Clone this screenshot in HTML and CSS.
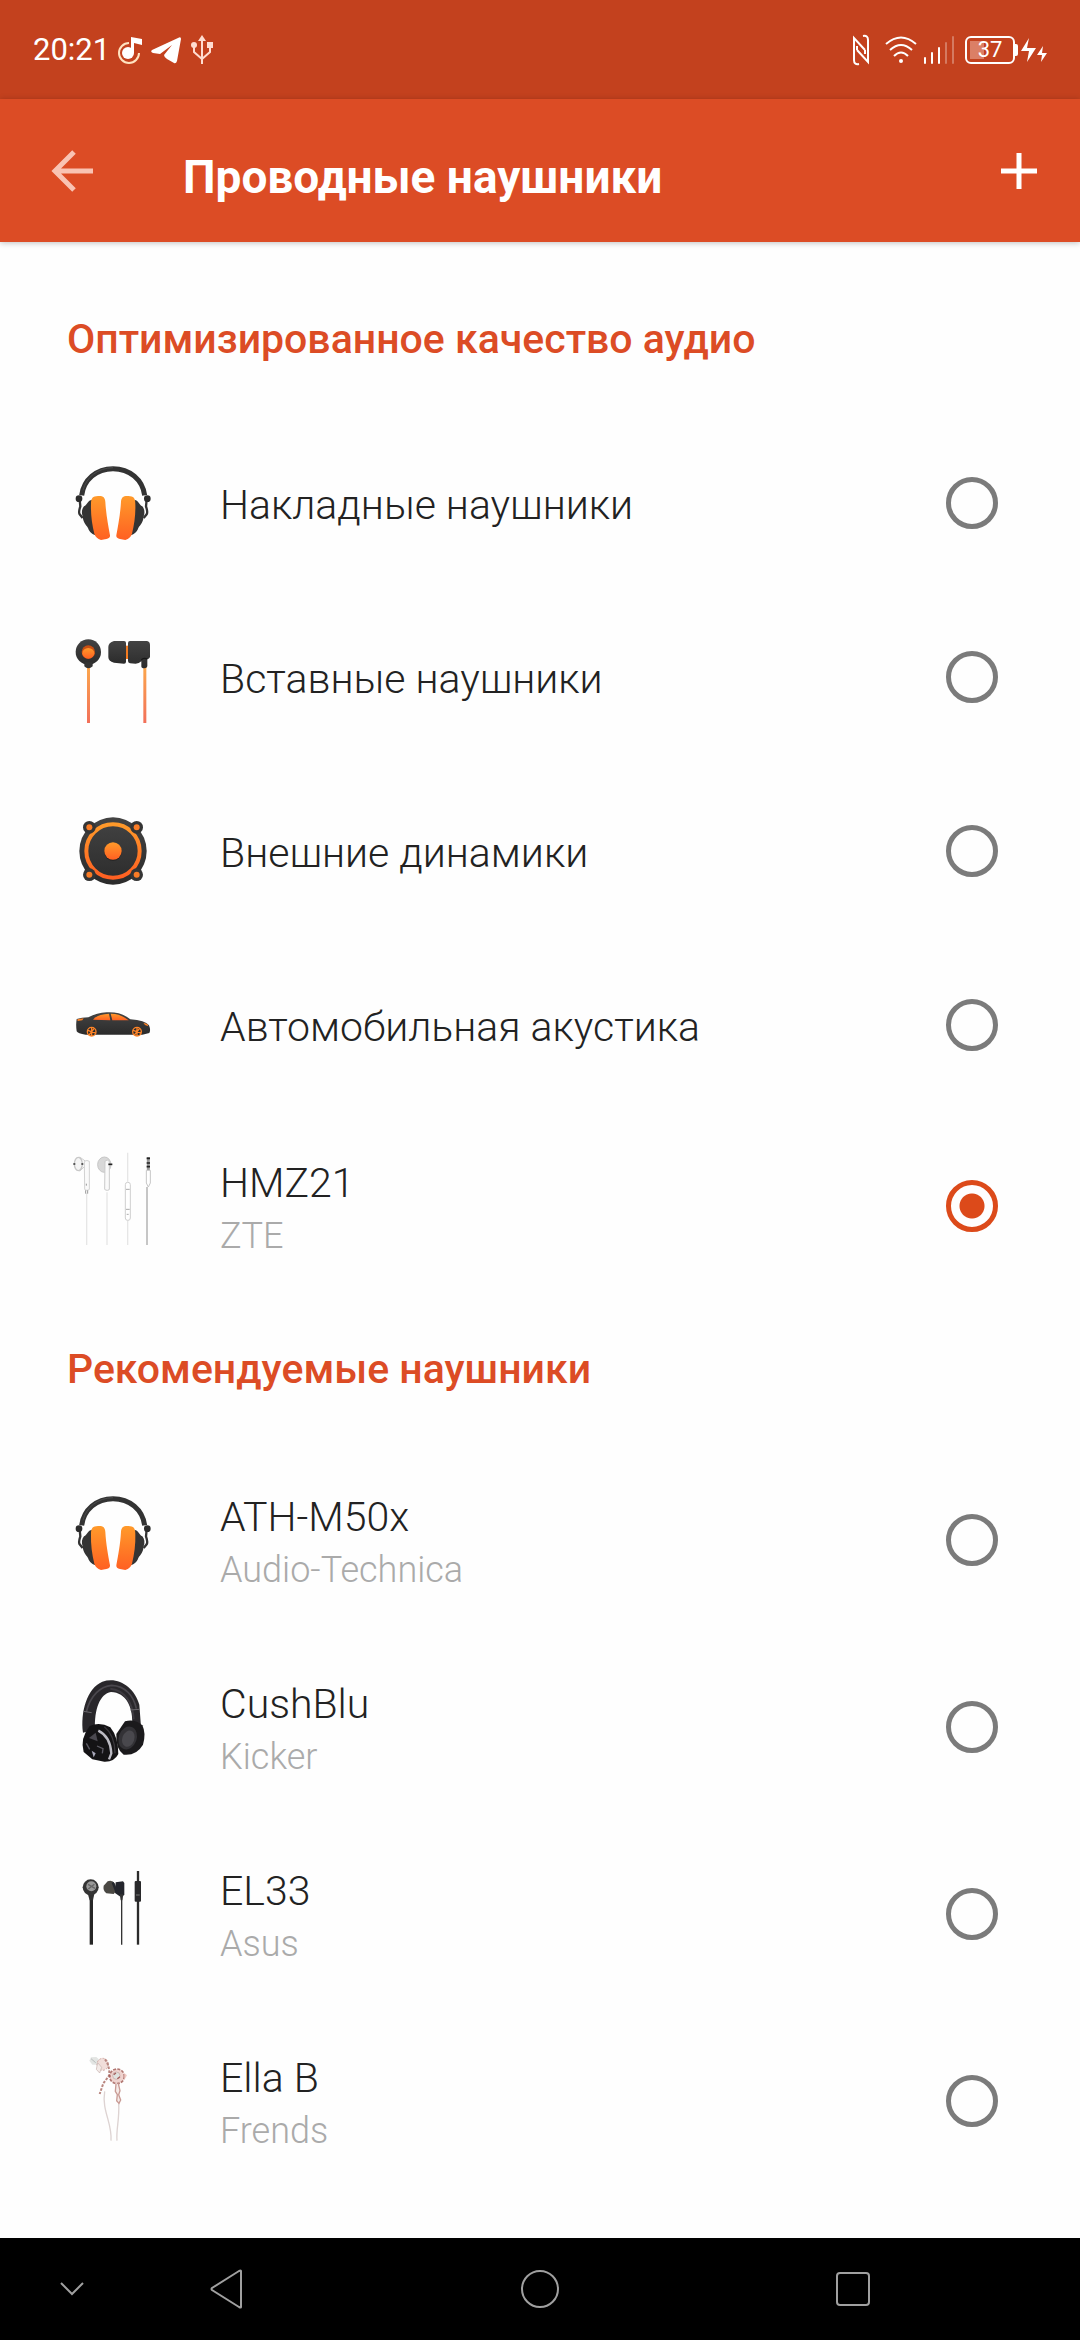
FILE: index.html
```html
<!DOCTYPE html>
<html lang="ru">
<head>
    <meta charset="UTF-8">
    <meta name="viewport" content="width=device-width, initial-scale=1.0">
    <title>Проводные наушники</title>
    <link rel="stylesheet" href="styles.css">
</head>

<body>

<!-- shared gradients and the headphones icon -->
<svg class="defs" width="0" height="0" aria-hidden="true">
  <defs>
    <linearGradient id="orange" x1="0" y1="0" x2="0" y2="1">
      <stop offset="0" stop-color="#ff9a2a"/>
      <stop offset="1" stop-color="#ff6022"/>
    </linearGradient>
    <linearGradient id="cable" gradientUnits="userSpaceOnUse" x1="0" y1="115" x2="0" y2="282">
      <stop offset="0" stop-color="#fba64c"/>
      <stop offset="1" stop-color="#f2705a"/>
    </linearGradient>
    <linearGradient id="dark" x1="0" y1="0" x2="0" y2="1">
      <stop offset="0" stop-color="#434343"/>
      <stop offset="1" stop-color="#2b2b2b"/>
    </linearGradient>
    <symbol id="half" viewBox="0 0 144 288">
      <path d="M81 134 C68 136 67 149 57 154 C50 162 49 174 53 184 C54 202 62 208 69 219 C73 232 82 238 98 243 Z" fill="#343434"/>
      <path d="M44 134 L46 154 Q40 172 44 178 L53 189" fill="none" stroke="#343434" stroke-width="7"/>
      <circle cx="42" cy="131" r="10" fill="#2c2c2c"/>
      <path d="M78 147 C78 129 83 124 99 123 C114 122 120 127 121 140 C123 178 130 213 135 241 Q136 250 124 252 L108 255 Q92 249 88 236 C81 208 77 178 78 147Z" fill="url(#orange)"/>
    </symbol>
    <symbol id="headphones" viewBox="0 0 288 288">
      <path d="M50 121 C56 74 94 41 144 41 S233 74 239 121" fill="none" stroke="#333" stroke-width="15"/>
      <path d="M54 106 C64 66 98 39 144 38" fill="none" stroke="#4c4c4c" stroke-width="3"/>
      <use href="#half" width="144" height="288"/>
      <use href="#half" width="144" height="288" transform="translate(289 0) scale(-1 1)"/>
    </symbol>
  </defs>
</svg>

<div class="status">
  <span class="time">20:21</span>
  <svg class="st-music" width="24" height="28" viewBox="0 0 24 28">
    <path d="M11 7 A10 10 0 1 0 21 17" fill="none" stroke="#ffe3c0" stroke-width="2"/>
    <circle cx="10" cy="17" r="6" fill="#fff"/>
    <path d="M13 17 V1 L24 3 V9 L16 7 V17Z" fill="#fff"/>
  </svg>
  <svg class="st-telegram" width="30" height="28" viewBox="0 0 30 28">
    <path d="M1 14 Q-1 16 2 17 L9 18 L21 9 L13 19 Q13 21 16 23 L23 27 Q25 28 26 25 L30 3 Q30 0 27 2 Z" fill="#fff"/>
  </svg>
  <svg class="st-usb" width="22" height="30" viewBox="0 0 22 30" fill="none" stroke="#ffdcd0" stroke-width="2">
    <path d="M11 4 V29 M3 11 V17 L11 24 M19 11 V17 L11 24"/>
    <path d="M11 0 L15 6 H7Z" fill="#ffdcd0" stroke="none"/>
    <circle cx="3" cy="10" r="3" fill="#ffdcd0" stroke="none"/>
    <path d="M16 7 H22 V13 H16Z" fill="#ffdcd0" stroke="none"/>
  </svg>

  <svg class="st-nfc" width="18" height="32" viewBox="0 0 18 32" fill="none" stroke="#fff" stroke-width="2">
    <path d="M7 30 Q2 31 2 26 V4 L13 16"/>
    <path d="M11 2 Q16 1 16 6 V28 L5 16"/>
    <path d="M5 16 V12 M13 16 V20"/>
  </svg>
  <svg class="st-wifi" width="32" height="28" viewBox="0 0 32 28" fill="none" stroke="#fff" stroke-width="2">
    <path d="M1 8 Q16 -5 31 8"/>
    <path d="M5 14 Q16 4 27 14"/>
    <path d="M9 20 Q16 13 23 20"/>
    <circle cx="16" cy="25" r="2" fill="#fff" stroke="none"/>
  </svg>
  <svg class="st-signal" width="32" height="28" viewBox="0 0 32 28" stroke="#fff" stroke-width="2" stroke-linecap="round">
    <path d="M2 22 V27 M9 17 V27 M16 12 V27"/>
    <path d="M23 7 V27 M30 1 V27" stroke-opacity=".3"/>
  </svg>
  <span class="battery">37</span>
  <svg class="st-bolt" width="26" height="24" viewBox="0 0 26 24" fill="#fff">
    <path d="M8 0 L0 13 H8 L6 24 L15 10 H6 Z"/>
    <path d="M22 8 L16 17 H21 L20 24 L26 15 H21 Z"/>
  </svg>
</div>

<header class="appbar">
  <button class="back" aria-label="Назад">
    <svg width="42" height="42" viewBox="0 0 42 42" fill="none" stroke="#f9c3b3" stroke-width="5">
      <path d="M42 21 H4 M23 2 L4 21 L23 40"/>
    </svg>
  </button>
  <h1>Проводные наушники</h1>
  <button class="add" aria-label="Добавить">
    <svg width="36" height="36" viewBox="0 0 36 36" stroke="#fff" stroke-width="5">
      <path d="M18 0 V36 M0 18 H36"/>
    </svg>
  </button>
</header>

<main>
  <h2>Оптимизированное качество аудио</h2>

  <label class="row">
    <svg class="icon" viewBox="0 0 288 288"><use href="#headphones"/></svg>
    <span class="text"><span class="name">Накладные наушники</span></span>
    <input type="radio" name="device">
  </label>

  <label class="row">
    <svg class="icon" viewBox="0 0 288 288">
      <path d="M66 108 H75 V282 H66Z M235 108 H244 V282 H235Z" fill="url(#cable)"/>
      <circle cx="70" cy="69" r="38" fill="url(#dark)"/>
      <path d="M58 100 H83 V112 Q77 118 70 118 Q63 118 58 112Z" fill="#333"/>
      <circle cx="70" cy="69" r="20" fill="#c94f12"/>
      <ellipse cx="70" cy="73" rx="18" ry="16" fill="url(#orange)"/>
      <path d="M181 50 H190 V90 H181Z" fill="#f47b20"/>
      <path d="M147 36 H177 Q183 36 183 42 V98 Q183 104 177 104 L147 101 Q130 97 130 84 V54 Q130 41 147 36Z" fill="url(#dark)"/>
      <path d="M195 36 H246 Q255 38 255 48 V84 Q253 90 247 91 V112 Q246 118 238 118 Q229 118 229 112 V97 Q222 104 212 104 L195 103 Q189 102 189 96 V42 Q189 36 195 36Z" fill="url(#dark)"/>
      <path d="M229 92 Q236 85 247 90" stroke="#181818" stroke-width="4" fill="none"/>
    </svg>
    <span class="text"><span class="name">Вставные наушники</span></span>
    <input type="radio" name="device">
  </label>

  <label class="row">
    <svg class="icon" viewBox="0 0 288 288">
      <circle cx="144" cy="144" r="101" fill="url(#dark)"/>
      <circle cx="144" cy="144" r="80" fill="none" stroke="url(#orange)" stroke-width="12"/>
      <g fill="#353535">
        <circle cx="73" cy="73" r="19"/>
        <circle cx="215" cy="73" r="19"/>
        <circle cx="73" cy="215" r="19"/>
        <circle cx="215" cy="215" r="19"/>
      </g>
      <g fill="#fb7c26">
        <circle cx="73" cy="73" r="9"/>
        <circle cx="215" cy="73" r="9"/>
        <circle cx="73" cy="215" r="9"/>
        <circle cx="215" cy="215" r="9"/>
      </g>
      <circle cx="144" cy="147" r="26" fill="#222"/>
      <circle cx="144" cy="144" r="26" fill="url(#orange)"/>
    </svg>
    <span class="text"><span class="name">Внешние динамики</span></span>
    <input type="radio" name="device">
  </label>

  <label class="row">
    <svg class="icon" viewBox="0 0 288 288">
      <path d="M35 126 Q50 121 70 121 Q96 107 125 106 Q160 104 185 119 L196 127 Q240 130 252 145 Q258 160 253 168 L232 173 H62 Q38 170 35 163 Q32 144 35 126Z" fill="url(#dark)"/>
      <path d="M84 128 Q98 111 132 110 L136 130Z" fill="url(#orange)"/>
      <path d="M137 110 Q165 109 191 130 L142 130Z" fill="url(#orange)"/>
      <path d="M37 127 L56 124 L52 130 L38 132Z M235 137 L247 141 L250 148 L240 144Z" fill="#f98127"/>
      <g fill="#2a2a2a" stroke="#ff8427" stroke-width="4">
        <circle cx="80" cy="164" r="13"/>
        <circle cx="216" cy="164" r="13"/>
      </g>
      <path d="M80 151 V177 M68 160 L92 168 M72 174 L88 154 M216 151 V177 M204 160 L228 168 M208 174 L224 154" stroke="#ff8427" stroke-width="4"/>
    </svg>
    <span class="text"><span class="name">Автомобильная акустика</span></span>
    <input type="radio" name="device">
  </label>

  <label class="row">
    <svg class="icon" viewBox="0 0 288 288" fill="none">
      <g stroke="#e6e6e6" stroke-width="4">
        <path d="M65 126 V282 M126 124 V282 M188 5 V92 M188 208 V282"/>
      </g>
      <path d="M246 108 V282" stroke="#8e8e8e" stroke-width="3"/>
      <ellipse cx="40" cy="39" rx="12" ry="20" fill="#f5f5f5" stroke="#c8c8c8" stroke-width="4"/>
      <path d="M25 39 H31 M49 39 H55" stroke="#333" stroke-width="5"/>
      <path d="M44 18 L62 31 M44 61 L58 47" stroke="#cfcfcf" stroke-width="3"/>
      <path d="M58 31 Q66 26 73 31 V114 Q73 118 66 118 Q59 118 59 114Z" fill="#fafafa" stroke="#d2d2d2" stroke-width="3"/>
      <path d="M62 118 V128 M68 118 V128 M64 98 V104" stroke="#999" stroke-width="3"/>
      <ellipse cx="118" cy="41" rx="20" ry="23" fill="#d8d8d8" stroke="#c6c6c6" stroke-width="3"/>
      <path d="M120 30 Q127 24 133 31 V114 Q133 118 127 118 Q119 118 119 114Z" fill="#fafafa" stroke="#cacaca" stroke-width="3"/>
      <path d="M130 40 H142" stroke="#222" stroke-width="5"/>
      <rect x="181" y="94" width="15" height="114" rx="7" fill="#fff" stroke="#cfcfcf" stroke-width="3"/>
      <path d="M183 115 H194 M183 175 H194 M185 190 H191" stroke="#aaa" stroke-width="3"/>
      <path d="M250 18 V58" stroke="#999" stroke-width="9"/>
      <path d="M245 22 H255 M245 36 H255 M245 47 H255" stroke="#222" stroke-width="5"/>
      <path d="M244 58 H256 V96 L250 108 L244 96Z" fill="#fff" stroke="#c6c6c6" stroke-width="3"/>
    </svg>
    <span class="text">
      <span class="name">HMZ21</span>
      <span class="brand">ZTE</span>
    </span>
    <input type="radio" name="device" checked>
  </label>

  <h2>Рекомендуемые наушники</h2>

  <label class="row">
    <svg class="icon" viewBox="0 0 288 288"><use href="#headphones"/></svg>
    <span class="text">
      <span class="name">ATH-M50x</span>
      <span class="brand">Audio-Technica</span>
    </span>
    <input type="radio" name="device">
  </label>

  <label class="row">
    <svg class="icon" viewBox="0 0 288 288">
      <path d="M54 182 C46 120 66 48 112 29 C158 12 208 44 223 98 L228 164 L202 150 C202 104 184 62 138 60 C104 66 88 112 90 172Z" fill="#29272b"/>
      <path d="M64 120 C76 70 108 42 140 40 C182 42 206 72 214 110" fill="none" stroke="#4b484e" stroke-width="5"/>
      <path d="M136 50 C178 54 204 92 206 142" fill="none" stroke="#3d3a40" stroke-width="6"/>
      <path d="M55 118 L80 122 M196 114 L222 112" stroke="#6a676c" stroke-width="3"/>
      <path d="M180 148 Q210 140 232 160 Q244 184 234 218 Q214 252 176 248 Q152 232 154 186Z" fill="#1b1a1c"/>
      <ellipse cx="188" cy="198" rx="27" ry="35" transform="rotate(20 188 198)" fill="#333236"/>
      <ellipse cx="190" cy="200" rx="18" ry="25" transform="rotate(20 190 200)" fill="#49484d"/>
      <path d="M74 162 Q104 148 136 166 Q160 196 160 246 Q148 270 118 269 L82 262 L56 240 Q44 200 74 162Z" fill="#141315"/>
      <path d="M100 176 Q136 194 139 244 L132 262" fill="none" stroke="#bdbcc4" stroke-width="7"/>
      <path d="M118 164 Q150 190 150 244" fill="none" stroke="#39373c" stroke-width="4"/>
      <path d="M72 198 L92 182 L98 208 Z" fill="#4a484f"/>
      <path d="M80 236 L92 244 L86 256Z" fill="#a9a8ba"/>
      <path d="M96 222 L114 230 L112 244 M64 214 L74 232" fill="none" stroke="#5e5c66" stroke-width="4"/>
    </svg>
    <span class="text">
      <span class="name">CushBlu</span>
      <span class="brand">Kicker</span>
    </span>
    <input type="radio" name="device">
  </label>

  <label class="row">
    <svg class="icon" viewBox="0 0 288 288">
      <path d="M79 108 V257" stroke="#262626" stroke-width="10"/>
      <path d="M170 112 V257" stroke="#333" stroke-width="4"/>
      <path d="M219 36 V257" stroke="#2b2b2b" stroke-width="7"/>
      <path d="M67 100 H89 L84 124 H74Z" fill="#303030"/>
      <circle cx="77" cy="85" r="24" fill="#343434"/>
      <circle cx="79" cy="82" r="15" fill="#999"/>
      <path d="M69 76 L90 88 M70 90 L88 76" stroke="#666" stroke-width="4"/>
      <path d="M128 67 Q142 62 150 74 L156 94 L146 105 L124 103 Q113 94 116 80Z" fill="#4a4843"/>
      <path d="M143 70 L154 98" stroke="#23262c" stroke-width="7"/>
      <path d="M152 70 L174 67 L178 72 V106 L174 112 H164 L150 102Z" fill="#23252c"/>
      <path d="M164 106 H175 L172 124 H167Z" fill="#333"/>
      <rect x="209" y="66" width="19" height="62" rx="3" fill="#29292b"/>
      <path d="M213 108 H224" stroke="#777" stroke-width="3"/>
    </svg>
    <span class="text">
      <span class="name">EL33</span>
      <span class="brand">Asus</span>
    </span>
    <input type="radio" name="device">
  </label>

  <label class="row">
    <svg class="icon" viewBox="0 0 288 288" fill="none">
      <path d="M119 136 C110 196 142 230 138 284 M161 170 C164 222 153 248 156 284" stroke="#ddd3d2" stroke-width="4"/>
      <path d="M78 34 L94 33 L104 42 L100 56 L82 56 L73 44Z" fill="#e3e5e3"/>
      <path d="M78 38 L92 50" stroke="#babdbc" stroke-width="3"/>
      <ellipse cx="113" cy="55" rx="17" ry="18" fill="#f1deda" stroke="#cfa9a3" stroke-width="3" stroke-dasharray="6 4"/>
      <path d="M98 50 L94 70 L104 81 L110 64Z" fill="#f3eae7" stroke="#c5b2ae" stroke-width="2"/>
      <path d="M120 40 Q134 58 133 88 L115 112 L104 144" stroke="#b98780" stroke-width="6" stroke-dasharray="8 4"/>
      <circle cx="156" cy="91" r="22" fill="#efd3cf" stroke="#b17772" stroke-width="5" stroke-dasharray="9 4"/>
      <circle cx="154" cy="89" r="11" fill="#dfe2df" stroke="#c5a4a0" stroke-width="2"/>
      <path d="M178 81 L186 88 L178 102" fill="#f1c9c3"/>
      <path d="M146 86 L153 81 M157 98 L165 92 M131 86 L136 92" stroke="#a65f5c" stroke-width="4"/>
      <path d="M153 114 L151 136 L157 146 L155 164 L162 172 L167 162 L161 146 L165 134 L160 113" stroke="#c99b95" stroke-width="4" fill="#f6ebe8"/>
    </svg>
    <span class="text">
      <span class="name">Ella B</span>
      <span class="brand">Frends</span>
    </span>
    <input type="radio" name="device">
  </label>
</main>

<nav class="navbar">
  <button class="hide" aria-label="Скрыть панель">
    <svg width="24" height="14" viewBox="0 0 24 14"><path d="M1 1 L12 12 L23 1"/></svg>
  </button>
  <button aria-label="Назад">
    <svg width="34" height="40" viewBox="0 0 34 40"><path d="M31 2 V38 Q31 39 29 38 L2 21 Q1 20 2 19 L29 2 Q31 1 31 2Z"/></svg>
  </button>
  <button aria-label="Домой">
    <svg width="40" height="40" viewBox="0 0 40 40"><circle cx="20" cy="20" r="18"/></svg>
  </button>
  <button aria-label="Недавние">
    <svg width="36" height="36" viewBox="0 0 36 36"><rect x="2" y="2" width="32" height="32" rx="3"/></svg>
  </button>
</nav>

</body>
</html>
```
FILE: styles.css
```css
* {
    box-sizing: border-box;
}
body {
    margin: 0;
    min-height: 100vh;
    display: flex;
    flex-direction: column;
    background-color: #fefefe;
    font-family: Roboto, "Noto Sans", sans-serif;
    color: #222;
}
svg {
    display: block;
    flex: none;
}
.defs {
    position: absolute;
}
button {
    padding: 0;
    border: 0;
    background: transparent;
    cursor: pointer;
}

/* status bar */
.status {
    display: flex;
    align-items: center;
    height: 99px;
    padding: 0 33px;
    background: #c3411e;
    color: #fff;
}
.time {
    font-size: 31px;
    line-height: 36px;
}
.st-music {
    margin-left: 8px;
}
.st-telegram {
    margin-left: 9px;
}
.st-usb {
    margin-left: 10px;
}
.st-nfc {
    margin-left: auto;
}
.st-wifi {
    margin-left: 15px;
}
.st-signal {
    margin-left: 6px;
}
.battery {
    position: relative;
    width: 50px;
    height: 28px;
    margin-left: 10px;
    border: 2px solid #fff;
    border-radius: 6px;
    background: linear-gradient(#db7f66, #db7f66) 3px 3px / 14px 18px no-repeat;
    font-size: 22px;
    line-height: 24px;
    text-align: center;
}
.battery::after {
    content: "";
    position: absolute;
    top: 6px;
    right: -5px;
    width: 3px;
    height: 12px;
    border-radius: 0 2px 2px 0;
    background: #fff;
}
.st-bolt {
    margin-left: 6px;
}

/* title bar */
.appbar {
    display: flex;
    align-items: center;
    height: 143px;
    padding: 0 43px 0 51px;
    background: #dc4c25;
    box-shadow: 0 1px 6px rgba(0, 0, 0, .25);
    color: #fff;
}
.appbar h1 {
    flex: 1;
    margin: 0 0 0 90px;
    padding-top: 12px;
    font-size: 46px;
    font-weight: 700;
    line-height: 56px;
}

/* list */
main {
    flex: 1;
    padding-top: 27px;
}
h2 {
    margin: 0;
    padding: 42px 67px 49px;
    font-size: 41px;
    font-weight: 500;
    line-height: 56px;
    color: #dc4c25;
}
.row {
    display: flex;
    align-items: center;
    padding: 39px 82px 39px 65px;
    cursor: pointer;
}
.icon {
    width: 96px;
    height: 96px;
    align-self: flex-start;
}
.text {
    flex: 1;
    display: flex;
    flex-direction: column;
    gap: 2px;
    margin-left: 59px;
    padding-top: 4px;
    font-weight: 300;
}
.name {
    font-size: 41px;
    line-height: 56px;
}
.brand {
    font-size: 36px;
    line-height: 47px;
    color: #aaa;
}
.row input {
    appearance: none;
    flex: none;
    width: 52px;
    height: 52px;
    margin: 0;
    border: 5px solid #7b7b7b;
    border-radius: 50%;
}
.row input:checked {
    border-color: #dc4a1a;
    background: radial-gradient(circle, #dc4a1a 12px, transparent 13px);
}

/* system navigation */
.navbar {
    display: grid;
    grid-template-columns: 70px 1fr 1fr 1fr 70px;
    height: 102px;
    background: #000;
}
.navbar button {
    display: flex;
    align-items: center;
    justify-content: center;
}
.navbar .hide {
    justify-content: flex-start;
    padding-left: 60px;
}
.navbar svg {
    fill: none;
    stroke: #a0a0a0;
    stroke-width: 2;
}
```
